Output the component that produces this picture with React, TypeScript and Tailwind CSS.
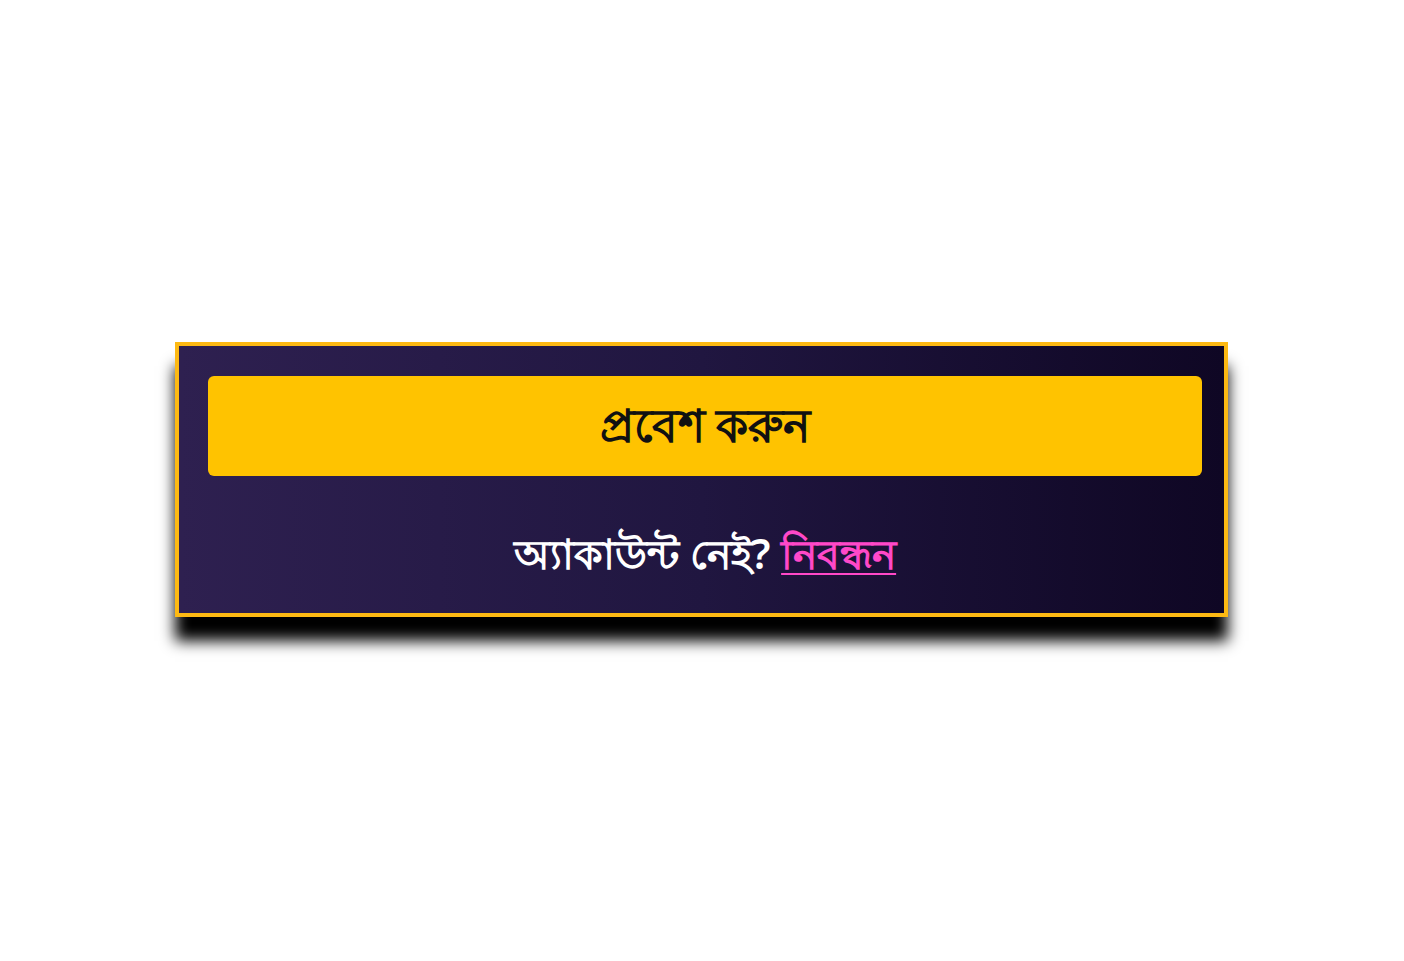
export default function App() {
  return (
    <div className="min-h-screen bg-white pt-[342px] pl-[175px]" style={{ fontFamily: '"Noto Sans", "Liberation Sans", sans-serif' }}>
      <div className="w-[1053px] h-[275px] border-4 border-[#fdb913] bg-gradient-to-r from-[#2e2050] via-[#201640] to-[#0f0724] shadow-[0_24px_14px_#000] pl-[29px] pr-[22px] pt-[30px]">
        <button className="w-full h-[100px] rounded-md bg-[#ffc300] text-[#111] text-[46px] font-bold leading-none pb-1">
          প্রবেশ করুন
        </button>
        <p className="mt-[57px] text-center text-white text-[41px] leading-none font-semibold">
          অ্যাকাউন্ট নেই?{" "}
          <a href="#" className="text-[#ff48c8] underline decoration-2 underline-offset-4">
            নিবন্ধন
          </a>
        </p>
      </div>
    </div>
  );
}
